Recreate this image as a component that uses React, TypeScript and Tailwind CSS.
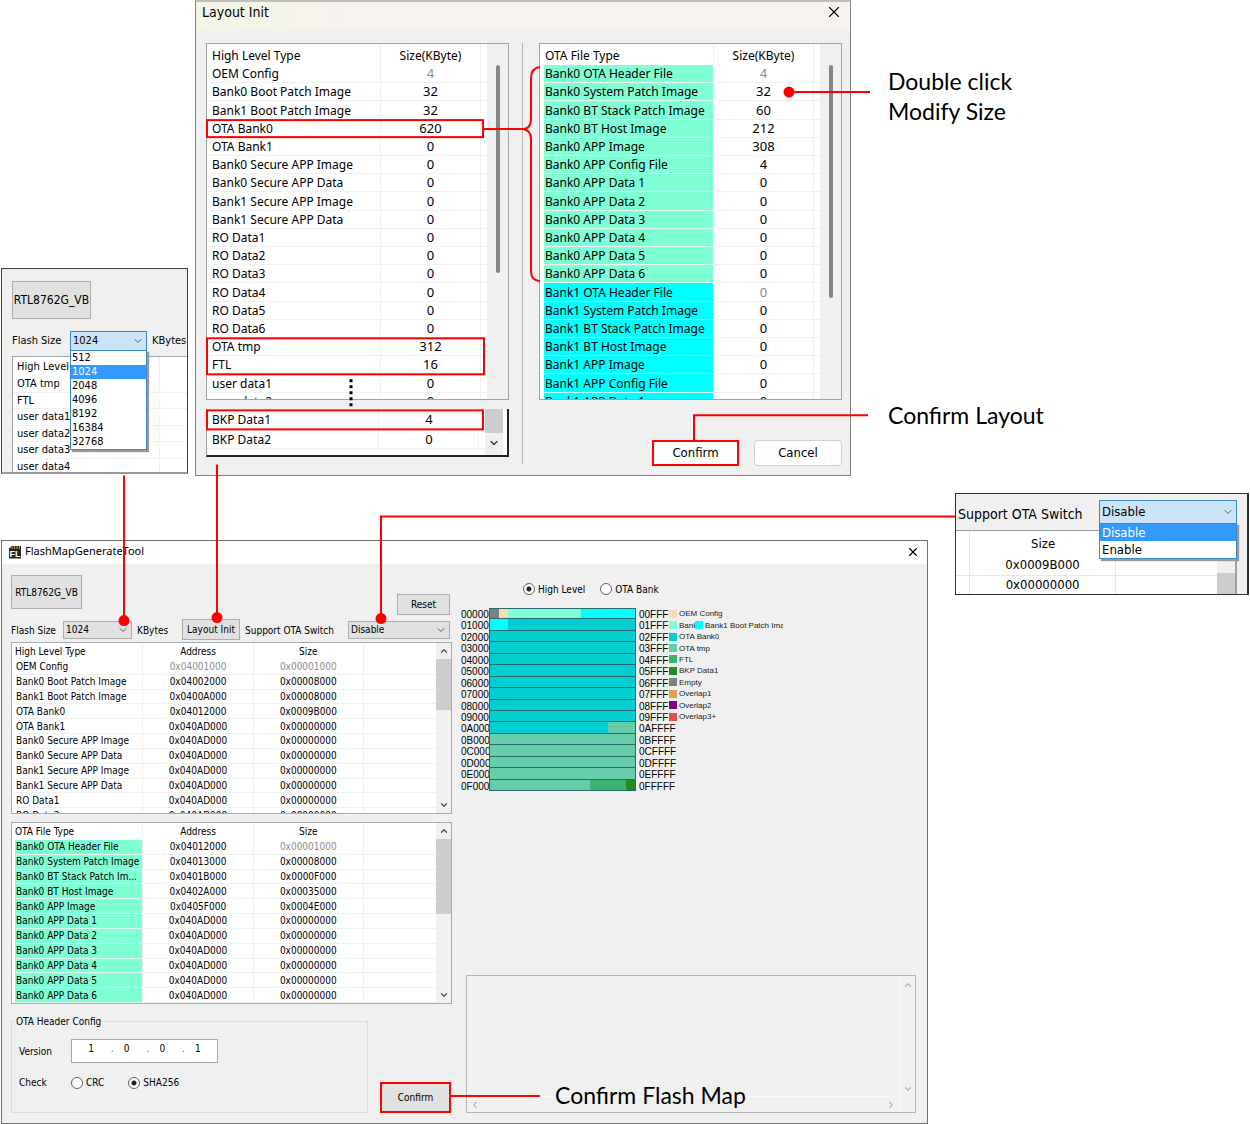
import type { ReactNode } from "react";
import { ChevronDown, ChevronLeft, ChevronRight, ChevronUp, X } from "lucide-react";

type Row = { name: string; cells: string[]; tint?: "mint" | "cyan"; dim?: number };

const zero = (name: string, tint?: Row["tint"]): Row => ({ name, cells: ["0"], tint });

const layoutRows: Row[] = [
  { name: "OEM Config", cells: ["4"], dim: 0 },
  { name: "Bank0 Boot Patch Image", cells: ["32"] },
  { name: "Bank1 Boot Patch Image", cells: ["32"] },
  { name: "OTA Bank0", cells: ["620"] },
  zero("OTA Bank1"),
  zero("Bank0 Secure APP Image"),
  zero("Bank0 Secure APP Data"),
  zero("Bank1 Secure APP Image"),
  zero("Bank1 Secure APP Data"),
  zero("RO Data1"),
  zero("RO Data2"),
  zero("RO Data3"),
  zero("RO Data4"),
  zero("RO Data5"),
  zero("RO Data6"),
  { name: "OTA tmp", cells: ["312"] },
  { name: "FTL", cells: ["16"] },
  zero("user data1"),
  zero("user data2"),
];

const bankRows: Row[] = [
  { name: "Bank0 OTA Header File", cells: ["4"], tint: "mint", dim: 0 },
  { name: "Bank0 System Patch Image", cells: ["32"], tint: "mint" },
  { name: "Bank0 BT Stack Patch Image", cells: ["60"], tint: "mint" },
  { name: "Bank0 BT Host Image", cells: ["212"], tint: "mint" },
  { name: "Bank0 APP Image", cells: ["308"], tint: "mint" },
  { name: "Bank0 APP Config File", cells: ["4"], tint: "mint" },
  zero("Bank0 APP Data 1", "mint"),
  zero("Bank0 APP Data 2", "mint"),
  zero("Bank0 APP Data 3", "mint"),
  zero("Bank0 APP Data 4", "mint"),
  zero("Bank0 APP Data 5", "mint"),
  zero("Bank0 APP Data 6", "mint"),
  { name: "Bank1 OTA Header File", cells: ["0"], tint: "cyan", dim: 0 },
  zero("Bank1 System Patch Image", "cyan"),
  zero("Bank1 BT Stack Patch Image", "cyan"),
  zero("Bank1 BT Host Image", "cyan"),
  zero("Bank1 APP Image", "cyan"),
  zero("Bank1 APP Config File", "cyan"),
  zero("Bank1 APP Data 1", "cyan"),
];

const empty = (name: string, tint?: Row["tint"]): Row => ({ name, cells: ["0x040AD000", "0x00000000", ""], tint });

const mapRows: Row[] = [
  { name: "Bank0 Boot Patch Image", cells: ["0x04002000", "0x00008000", ""] },
  { name: "Bank1 Boot Patch Image", cells: ["0x0400A000", "0x00008000", ""] },
  { name: "OTA Bank0", cells: ["0x04012000", "0x0009B000", ""] },
  empty("OTA Bank1"),
  empty("Bank0 Secure APP Image"),
  empty("Bank0 Secure APP Data"),
  empty("Bank1 Secure APP Image"),
  empty("Bank1 Secure APP Data"),
  empty("RO Data1"),
  empty("RO Data2"),
];

const fileRows: Row[] = [
  { name: "Bank0 OTA Header File", cells: ["0x04012000", "0x00001000", ""], tint: "mint", dim: 1 },
  { name: "Bank0 System Patch Image", cells: ["0x04013000", "0x00008000", ""], tint: "mint" },
  { name: "Bank0 BT Stack Patch Im...", cells: ["0x0401B000", "0x0000F000", ""], tint: "mint" },
  { name: "Bank0 BT Host Image", cells: ["0x0402A000", "0x00035000", ""], tint: "mint" },
  { name: "Bank0 APP Image", cells: ["0x0405F000", "0x0004E000", ""], tint: "mint" },
  empty("Bank0 APP Data 1", "mint"),
  empty("Bank0 APP Data 2", "mint"),
  empty("Bank0 APP Data 3", "mint"),
  empty("Bank0 APP Data 4", "mint"),
  empty("Bank0 APP Data 5", "mint"),
  empty("Bank0 APP Data 6", "mint"),
];

const nameCell = {
  none: "border-l-white bg-white border-r-[#f0f0f0] border-b-[#f0f0f0]",
  mint: "border-l-white bg-[#7fffd4] border-r-[#f0f0f0] border-b-[#dff5ee]",
  cyan: "border-l-white bg-[#00ffff] border-r-[#f0f0f0] border-b-[#c8f4f4]",
};

/* Two-column size table used inside the Layout Init dialog. */
function SizeTable({ head, rows, thumb }: { head: string; rows: Row[]; thumb: string }) {
  return (
    <div className="flex h-[357px] shrink-0 overflow-hidden border border-[#a0a5ab] bg-white">
      <div className="min-w-0 flex-1 overflow-hidden">
        <table className="h-[367px] w-full table-fixed border-separate border-spacing-0 font-['Noto_Sans',sans-serif] text-xs leading-[17px]">
          <colgroup>
            <col className="w-[62%]" />
            <col className="w-[36%]" />
            <col />
          </colgroup>
          <thead>
            <tr>
              <th className="h-[21px] border-r border-[#f0f0f0] pt-px pl-[5px] text-left font-normal">{head}</th>
              <th className="h-[21px] border-r border-[#f0f0f0] pt-px text-center font-normal">Size(KByte)</th>
              <th />
            </tr>
          </thead>
          <tbody>
            {rows.map((r) => (
              <tr key={r.name}>
                <td className={`overflow-hidden border-r border-b border-l-4 py-0 pl-px whitespace-nowrap ${nameCell[r.tint ?? "none"]}`}>
                  {r.name}
                </td>
                <td
                  className={`border-r border-b border-[#f0f0f0] text-center text-[13px] ${r.dim === 0 ? "text-[#8c8c8c]" : ""}`}
                >
                  {r.cells[0]}
                </td>
                <td className="border-b border-[#f0f0f0]" />
              </tr>
            ))}
          </tbody>
        </table>
      </div>
      <div className="flex w-[21px] shrink-0 justify-center bg-[#f0f0f0] pt-[21px]">
        <div className={`w-1 rounded-full bg-[#858585] ${thumb}`} />
      </div>
    </div>
  );
}

/* Address/size table of the main window. */
function AddressTable({ head, rows, box, thumb }: { head: string; rows: Row[]; box: string; thumb: string }) {
  return (
    <div className={`flex overflow-hidden border border-[#a8acb0] bg-white ${box}`}>
      <div className="min-w-0 flex-1 overflow-hidden">
        <table className="h-[180px] w-full table-fixed border-separate border-spacing-0 text-[10px] leading-[13px]">
          <colgroup>
            <col className="w-[31%]" />
            <col className="w-[26%]" />
            <col className="w-[26%]" />
            <col />
          </colgroup>
          <thead>
            <tr>
              <th className="h-[17px] border-r border-[#f0f0f0] pl-[3px] text-left font-normal">{head}</th>
              <th className="h-[17px] border-r border-[#f0f0f0] text-center font-normal">Address</th>
              <th className="h-[17px] border-r border-[#f0f0f0] text-center font-normal">Size</th>
              <th />
            </tr>
          </thead>
          <tbody>
            {rows.map((r) => (
              <tr key={r.name}>
                <td className={`overflow-hidden border-r border-b border-l-[3px] p-0 pl-px whitespace-nowrap ${nameCell[r.tint ?? "none"]}`}>
                  {r.name}
                </td>
                {r.cells.map((c, i) => (
                  <td
                    key={i}
                    className={`border-b border-[#f0f0f0] text-center ${i < 2 ? "border-r" : ""} ${
                      r.dim === i || r.dim === 9 ? "text-[#8c8c8c]" : ""
                    }`}
                  >
                    {c}
                  </td>
                ))}
              </tr>
            ))}
          </tbody>
        </table>
      </div>
      <div className="flex w-[15px] shrink-0 flex-col items-center bg-[#f0f0f0]">
        <ChevronUp className="my-[3px] h-2.5 w-2.5 shrink-0 text-[#505050]" strokeWidth={3} />
        <div className={`w-full bg-[#cdcdcd] ${thumb}`} />
        <ChevronDown className="mt-auto mb-[3px] h-2.5 w-2.5 shrink-0 text-[#505050]" strokeWidth={3} />
      </div>
    </div>
  );
}

function Combo({
  id,
  value,
  options,
  box,
  children,
}: {
  id: string;
  value: string;
  options: string[];
  box: string;
  children?: ReactNode;
}) {
  return (
    <div className={`relative flex items-center ${box}`}>
      <select id={id} defaultValue={value} className="h-full w-full appearance-none bg-transparent pr-5 pl-0.5 outline-none">
        {options.map((o) => (
          <option key={o}>{o}</option>
        ))}
      </select>
      <ChevronDown className="pointer-events-none absolute right-0.5 h-3 w-3 text-[#606060]" strokeWidth={2} />
      {children}
    </div>
  );
}

function OptionList({ options, active, item }: { options: string[]; active: string; item: string }) {
  return (
    <ul
      role="listbox"
      className="absolute top-full -right-px -left-px z-10 border border-[#3c87c8] bg-white shadow-[2px_2px_1px_#999]"
    >
      {options.map((o) => (
        <li
          key={o}
          role="option"
          aria-selected={o === active}
          className={`${item} ${o === active ? "bg-[#3399ff] text-white" : ""}`}
        >
          {o}
        </li>
      ))}
    </ul>
  );
}

function Radio({ name, label, checked }: { name: string; label: string; checked?: boolean }) {
  return (
    <label className="flex items-center gap-[3px] whitespace-nowrap">
      <input
        type="radio"
        name={name}
        defaultChecked={checked}
        className="h-3 w-3 appearance-none rounded-full border border-[#606060] bg-white checked:bg-[radial-gradient(circle,#222_0_2px,#fff_3px)]"
      />
      {label}
    </label>
  );
}

const sizes = ["512", "1024", "2048", "4096", "8192", "16384", "32768"];

function FlashSizeSnippet() {
  return (
    <section className="mt-[268px] h-[206px] min-w-0 overflow-hidden border border-b-2 border-[#404040] border-b-[#9a9a9a] bg-[#f0f0f0] pt-3 pl-2.5 text-[11px]">
      <button className="h-[38px] w-[79px] border border-[#adadad] bg-[#e1e1e1] text-xs whitespace-nowrap">RTL8762G_VB</button>
      <div className="mt-3 flex items-center">
        <label htmlFor="flash-size-open" className="w-[58px] shrink-0 whitespace-nowrap">
          Flash Size
        </label>
        <Combo
          id="flash-size-open"
          value="1024"
          options={sizes}
          box="h-5 w-[77px] shrink-0 border border-[#3c87c8] bg-[#cce4f7]"
        >
          <OptionList options={sizes} active="1024" item="h-[14px] pl-px leading-[14px]" />
        </Combo>
        <span className="ml-[5px] whitespace-nowrap">KBytes</span>
      </div>
      <div className="mt-[5px] border-t border-l border-[#a0a5ab] bg-white">
        <table className="h-[118px] w-full table-fixed border-separate border-spacing-0 leading-[15px]">
          <thead>
            <tr>
              <th className="h-[19px] w-[147px] border-r border-[#f0f0f0] pl-1 text-left font-normal">High Level</th>
              <th />
            </tr>
          </thead>
          <tbody>
            {["OTA tmp", "FTL", "user data1", "user data2", "user data3", "user data4"].map((n) => (
              <tr key={n}>
                <td className="border-r border-b border-[#f0f0f0] pl-1">{n}</td>
                <td className="border-b border-[#f0f0f0]" />
              </tr>
            ))}
          </tbody>
        </table>
      </div>
    </section>
  );
}

function LayoutDialog() {
  return (
    <section className="h-[476px] min-w-0 border border-t-2 border-[#808080] border-t-[#bdbdbd] bg-[#f0f0f0] text-[13px]">
      <header className="flex h-7 items-center justify-between bg-linear-to-r from-[#f3f5e6] to-[#f7f2ee] to-30% pr-[7px] pb-2 pl-1.5">
        <h2 className="text-sm">Layout Init</h2>
        <button aria-label="Close">
          <X className="h-[18px] w-[18px]" strokeWidth={1.5} />
        </button>
      </header>
      <div className="mt-[13px] flex pr-2 pl-2.5">
        <div className="flex min-w-0 flex-1 flex-col">
          <SizeTable head="High Level Type" rows={layoutRows} thumb="h-[208px]" />
          <div className="mt-[9px] flex h-12 border-r-2 border-b-2 border-l border-[#222] border-l-[#a0a5ab] bg-white">
            <div className="min-w-0 flex-1 overflow-hidden">
              <table className="w-full table-fixed border-separate border-spacing-0 font-['Noto_Sans',sans-serif] text-xs leading-[17px]">
                <colgroup>
                  <col className="w-[62%]" />
                  <col className="w-[36%]" />
                  <col />
                </colgroup>
                <tbody>
                  {[
                    ["BKP Data1", "4"],
                    ["BKP Data2", "0"],
                  ].map(([n, v]) => (
                    <tr key={n}>
                      <td className="h-[19px] border-r border-b border-[#f0f0f0] pt-0.5 pl-[5px]">{n}</td>
                      <td className="h-[19px] border-r border-b border-[#f0f0f0] pt-0.5 text-center text-[13px]">{v}</td>
                      <td className="border-b border-[#f0f0f0]" />
                    </tr>
                  ))}
                </tbody>
              </table>
            </div>
            <div className="mr-1 flex w-[18px] shrink-0 flex-col items-center bg-[#f0f0f0]">
              <div className="h-6 w-full bg-[#cdcdcd]" />
              <ChevronDown className="mt-1 h-3 w-3 text-[#404040]" strokeWidth={3} />
            </div>
          </div>
        </div>
        <div className="mx-[13px] h-[421px] w-px shrink-0 bg-[#b4b4b4]" />
        <div className="ml-[3px] flex min-w-0 flex-1 flex-col">
          <SizeTable head="OTA File Type" rows={bankRows} thumb="h-[233px]" />
          <div className="mt-10 flex justify-end gap-[15px]">
            <button className="h-[26px] w-[87px] border-2 border-[#ff0000] bg-[#fdfdfd]">Confirm</button>
            <button className="h-[26px] w-[88px] rounded border border-[#d0d0d0] bg-[#fdfdfd]">Cancel</button>
          </div>
        </div>
      </div>
    </section>
  );
}

function SwitchSnippet() {
  const options = ["Disable", "Enable"];
  return (
    <section className="h-[102px] min-w-0 overflow-hidden border border-r-2 border-[#303030] bg-[#f0f0f0] text-[13px]">
      <div className="flex items-center pt-1.5 pr-2.5 pl-0.5">
        <label htmlFor="ota-switch-open" className="pt-1 text-sm whitespace-nowrap">
          Support OTA Switch
        </label>
        <Combo
          id="ota-switch-open"
          value="Disable"
          options={options}
          box="ml-auto h-6 w-[138px] shrink-0 border border-[#3c87c8] bg-[#cce4f7]"
        >
          <OptionList options={options} active="Disable" item="h-[17px] pl-0.5 leading-[17px]" />
        </Combo>
      </div>
      <div className="mt-[6px] mr-2.5 flex h-16 border-t border-r-2 border-[#9a9fa5] bg-white">
        <table className="h-[65px] w-full table-fixed border-separate border-spacing-0 text-[13px] leading-4">
          <colgroup>
            <col className="w-[14px]" />
            <col className="w-[56%]" />
            <col />
          </colgroup>
          <thead>
            <tr>
              <th className="h-6 border-r border-[#e8e8e8]" />
              <th className="h-6 pt-0.5 font-normal">Size</th>
              <th />
            </tr>
          </thead>
          <tbody>
            {["0x0009B000", "0x00000000"].map((v) => (
              <tr key={v}>
                <td className="border-r border-b border-[#e8e8e8]" />
                <td className="border-r border-b border-[#e8e8e8] text-center">{v}</td>
                <td className="border-b border-[#e8e8e8]" />
              </tr>
            ))}
          </tbody>
        </table>
        <div className="w-[18px] shrink-0 bg-[#f0f0f0] pt-[42px]">
          <div className="h-full bg-[#cdcdcd]" />
        </div>
      </div>
    </section>
  );
}

const tone: Record<string, string> = {
  gray: "bg-[#808080]",
  oem: "bg-[#fadcb0]",
  mint: "bg-[#7fffd4]",
  cyan: "bg-[#00ffff]",
  bank: "bg-[#00ced1]",
  tmp: "bg-[#66cdaa]",
  ftl: "bg-[#3cb371]",
  bkp: "bg-[#228b22]",
  over1: "bg-[#e0a050]",
  over2: "bg-[#800080]",
  over3: "bg-[#e05050]",
};

/* Each block row covers sixteen 4-KByte sectors. */
const blocks: [string, number][][] = "0123456789ABCDEF".split("").map((_, i) => {
  if (i === 0) return [["gray", 1], ["oem", 1], ["mint", 8], ["cyan", 6]];
  if (i === 1) return [["cyan", 2], ["bank", 14]];
  if (i < 10) return [["bank", 16]];
  if (i === 10) return [["bank", 13], ["tmp", 3]];
  if (i < 15) return [["tmp", 16]];
  return [["tmp", 11], ["ftl", 4], ["bkp", 1]];
});

const legend: [string, string][] = [
  ["oem", "OEM Config"],
  ["mint", "Bank0 Boot Patch Image"],
  ["bank", "OTA Bank0"],
  ["tmp", "OTA tmp"],
  ["ftl", "FTL"],
  ["bkp", "BKP Data1"],
  ["gray", "Empty"],
  ["over1", "Overlap1"],
  ["over2", "Overlap2"],
  ["over3", "Overlap3+"],
];

function LegendKey({ color, label, box }: { color: string; label: string; box: string }) {
  return (
    <span className={`flex items-center gap-0.5 overflow-hidden text-[8px] whitespace-nowrap text-[#222] ${box}`}>
      <i className={`h-2 w-2 shrink-0 ${tone[color]}`} />
      {label}
    </span>
  );
}

function FlashMap() {
  return (
    <ol className="grid h-[183px] auto-rows-fr font-['Liberation_Sans',sans-serif] text-[10px] leading-[11px]">
      {blocks.map((segments, i) => {
        const hex = i.toString(16).toUpperCase();
        const item = legend[i];
        return (
          <li key={hex} className="flex min-h-0">
            <span className="w-7 shrink-0 overflow-hidden pt-px">{`0${hex}0000`}</span>
            <span className={`flex w-[147px] shrink-0 border-x border-b border-[#2a6a6c] ${i === 0 ? "border-t" : ""}`}>
              {segments.map(([color, n]) => (
                <i key={color} className={tone[color]} style={{ flexGrow: n }} />
              ))}
            </span>
            <span className={`ml-[3px] shrink-0 overflow-hidden pt-px ${item ? "w-[30px]" : ""}`}>{`0${hex}FFFF`}</span>
            {item && <LegendKey color={item[0]} label={item[1]} box={i === 1 ? "w-[26px]" : ""} />}
            {i === 1 && <LegendKey color="cyan" label="Bank1 Boot Patch Image" box="w-[88px]" />}
          </li>
        );
      })}
    </ol>
  );
}

function AppIcon() {
  return (
    <svg viewBox="0 0 12 14" className="h-3.5 w-3 shrink-0" aria-hidden="true">
      <path d="M1 3 L2.500 1 H12 V13.500 H0 V3Z" fill="#262626" />
      <path d="M3 1V4M5.500 1V4M8 1V4M10.500 1V4" stroke="#c9963c" strokeWidth="1" />
      <text x="6" y="12" textAnchor="middle" fontSize="9" fontWeight="700" fill="#fff" fontFamily="Liberation Sans">
        FL
      </text>
    </svg>
  );
}

function MainWindow() {
  const button = "border border-[#adadad] bg-[#e1e1e1] whitespace-nowrap";
  return (
    <section className="mt-[47px] flex min-w-0 flex-col border border-[#707070] bg-[#f0f0f0] text-[10px]">
      <header className="flex h-[23px] items-center bg-white px-[7px] pb-0.5">
        <AppIcon />
        <h1 className="ml-1 font-['Noto_Sans',sans-serif] text-[11px]">FlashMapGenerateTool</h1>
        <button aria-label="Close" className="ml-auto">
          <X className="h-3.5 w-3.5" strokeWidth={2} />
        </button>
      </header>
      <div className="flex pt-[11px] pr-[11px] pb-2.5 pl-[9px]">
        <div className="flex w-[441px] shrink-0 flex-col">
          <div className="flex items-start justify-between pr-0.5">
            <button className={`h-[34px] w-[71px] ${button}`}>RTL8762G_VB</button>
            <button className={`mt-[19px] h-[21px] w-[53px] ${button}`}>Reset</button>
          </div>
          <div className="mt-1 flex items-center whitespace-nowrap">
            <label htmlFor="flash-size" className="w-[52px] pt-0.5">
              Flash Size
            </label>
            <Combo id="flash-size" value="1024" options={sizes} box={`h-[18px] w-[69px] ${button}`} />
            <span className="ml-[5px] w-[45px] pt-0.5">KBytes</span>
            <button className={`h-[21px] w-[58px] ${button}`}>Layout Init</button>
            <label htmlFor="ota-switch" className="ml-[5px] pt-0.5">
              Support OTA Switch
            </label>
            <Combo id="ota-switch" value="Disable" options={["Disable", "Enable"]} box={`mr-0.5 ml-auto h-[18px] w-[102px] ${button}`} />
          </div>
          <div className="mt-0.5 flex flex-col gap-2">
            <AddressTable
              head="High Level Type"
              rows={[{ name: "OEM Config", cells: ["0x04001000", "0x00001000", ""], dim: 9 }, ...mapRows]}
              box="h-[172px]"
              thumb="h-[51px]"
            />
            <AddressTable head="OTA File Type" rows={fileRows} box="h-[182px]" thumb="h-[75px]" />
          </div>
          <div className="flex items-end justify-between">
            <fieldset className="mt-[10px] h-[99px] w-[357px] border border-[#dcdcdc] pl-[7px]">
              <legend className="-ml-1 px-px">OTA Header Config</legend>
              <div className="mt-[10px] flex items-center">
                <span className="w-[52px]">Version</span>
                <div className="flex h-6 w-[147px] items-start justify-between border border-[#a8a8a8] bg-white px-2.5 pt-px">
                  {["1", "0", "0", "1"].map((v, i) => (
                    <div key={i} className="flex items-center gap-1">
                      {i > 0 && <span className="text-[#666]">.</span>}
                      <input aria-label={`Version part ${i + 1}`} defaultValue={v} className="w-[18px] text-center outline-none" />
                    </div>
                  ))}
                </div>
              </div>
              <div className="mt-3 flex items-center">
                <span className="w-[52px]">Check</span>
                <Radio name="check" label="CRC" />
                <span className="w-6" />
                <Radio name="check" label="SHA256" checked />
              </div>
            </fieldset>
            <button className="mr-px h-[31px] w-[71px] border-2 border-[#ff0000] bg-[#e1e1e1]">Confirm</button>
          </div>
        </div>
        <div className="flex min-w-0 flex-1 flex-col pl-[9px]">
          <div className="mt-1.5 mb-[11px] flex h-4 items-center gap-[15px] pl-[62px]">
            <Radio name="view" label="High Level" checked />
            <Radio name="view" label="OTA Bank" />
          </div>
          <FlashMap />
          <div className="relative mt-auto ml-[5px] h-[138px] border border-[#b4b4b4]">
            <textarea aria-label="Log" readOnly className="block h-full w-full resize-none outline-none" />
            <div className="pointer-events-none absolute inset-y-0 right-0 flex w-4 flex-col items-center justify-between border-l border-[#f8f8f8] pt-1 pb-[18px]">
              <ChevronUp className="h-2.5 w-2.5 text-[#b8b8b8]" strokeWidth={3} />
              <ChevronDown className="h-2.5 w-2.5 text-[#b8b8b8]" strokeWidth={3} />
            </div>
            <div className="pointer-events-none absolute right-4 bottom-0 left-0 flex h-4 items-center justify-between border-t border-[#f8f8f8] px-[3px]">
              <ChevronLeft className="h-2.5 w-2.5 text-[#b8b8b8]" strokeWidth={3} />
              <ChevronRight className="h-2.5 w-2.5 text-[#b8b8b8]" strokeWidth={3} />
            </div>
          </div>
        </div>
      </div>
    </section>
  );
}

/* Red callout lines, frames and dots drawn over the windows. */
function Callouts() {
  return (
    <svg
      viewBox="0 0 1250 1124"
      preserveAspectRatio="none"
      className="pointer-events-none absolute inset-0 z-20 h-full w-full"
      aria-hidden="true"
    >
      <g fill="none" stroke="#ff0000" strokeWidth="2">
        <rect x="207" y="120" width="276" height="17" />
        <rect x="207" y="338" width="277" height="36" />
        <rect x="207" y="410" width="276" height="19" />
        <path d="M484 129H523M540 67Q531 68 531 78V120Q530 129 523 129Q531 130 531 139V271Q531 280 540 281" />
        <path d="M789 92H870M694 440V415H868M124 475V620M217 464V617M955 516H381V618M451 1095H540" />
      </g>
      <g fill="#ff0000">
        <circle cx="789" cy="92" r="5.500" />
        <circle cx="124" cy="620" r="5.500" />
        <circle cx="217" cy="617" r="5.500" />
        <circle cx="381" cy="618" r="5.500" />
      </g>
      <path d="M351 379V406" stroke="#000" strokeWidth="3" strokeDasharray="3 3" />
    </svg>
  );
}

export default function App() {
  return (
    <main className="relative bg-white pb-px font-['DejaVu_Sans_Condensed','DejaVu_Sans',sans-serif] text-black">
      <div className="grid grid-cols-[minmax(0,187fr)_minmax(0,656fr)_minmax(0,392fr)] items-start gap-x-[7px] pl-px">
        <FlashSizeSnippet />
        <LayoutDialog />
        <div className="pt-[66px] pl-[30px] font-['Lato',sans-serif] text-[23px] leading-[30px]">
          <p>
            Double click
            <br />
            Modify Size
          </p>
          <p className="mt-[274px]">Confirm Layout</p>
        </div>
      </div>
      <div className="mt-[17px] grid grid-cols-[minmax(0,927fr)_minmax(0,294fr)] items-start gap-x-[27px] pr-px pl-px">
        <MainWindow />
        <SwitchSnippet />
      </div>
      <p className="absolute bottom-[15px] left-[44.4%] z-20 font-['Lato',sans-serif] text-[23px] leading-[30px]">Confirm Flash Map</p>
      <Callouts />
    </main>
  );
}
